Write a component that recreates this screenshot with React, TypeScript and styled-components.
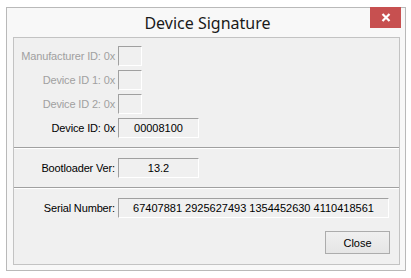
import React from "react";
import styled, { createGlobalStyle } from "styled-components";

const Global = createGlobalStyle`
  html, body { margin: 0; padding: 0; background: #ffffff; }
  body { font-family: "Liberation Sans", Arial, sans-serif; }
`;

const Page = styled.div`
  padding: 7px 0 0 6px;
`;

const Window = styled.div`
  position: relative;
  width: 398px;
  border: 1px solid #b9b9b9;
  background: #f8f8f8;
  box-sizing: content-box;
`;

const TitleBar = styled.div`
  height: 29px;
  display: flex;
  align-items: center;
  justify-content: center;
  font-family: "Noto Sans", "Open Sans", sans-serif;
  font-size: 16px;
  color: #1a1a1a;
  padding-left: 3px;
  padding-top: 1px;
  box-sizing: border-box;
`;

const CloseX = styled.div`
  position: absolute;
  top: -1px;
  right: 4px;
  width: 31px;
  height: 21px;
  background: #c75050;
  display: flex;
  align-items: center;
  justify-content: center;
`;

const Client = styled.div`
  margin: 0 5px 5px 6px;
  border: 1px solid #c3c3c3;
  background: #f0f0f0;
  padding: 8px 0 10px 0;
  display: flex;
  flex-direction: column;
  font-size: 11px;
  font-family: "Liberation Sans", Arial, sans-serif;
`;

const Rows = styled.div`
  display: flex;
  flex-direction: column;
  gap: 4px;
`;

const Row = styled.div`
  display: grid;
  grid-template-columns: 101px auto;
  column-gap: 3px;
  align-items: start;
`;

const Label = styled.div<{ $disabled?: boolean }>`
  text-align: right;
  line-height: 20px;
  height: 20px;
  white-space: nowrap;
  color: ${(p) => (p.$disabled ? "#a0a0a0" : "#000000")};
  letter-spacing: -0.15px;
`;

const ValueBox = styled.div<{ $w: number }>`
  width: ${(p) => p.$w}px;
  height: 20px;
  box-sizing: border-box;
  border-top: 1px solid #a0a0a0;
  border-left: 1px solid #a0a0a0;
  border-right: 1px solid #ffffff;
  border-bottom: 1px solid #ffffff;
  line-height: 18px;
  text-align: center;
  color: #000;
  white-space: nowrap;
`;

const Separator = styled.div`
  height: 1px;
  margin: 9px 0;
  background: #a0a0a0;
  border-bottom: 1px solid #ffffff;
`;

const Footer = styled.div`
  display: flex;
  justify-content: flex-end;
  margin-top: 13px;
  padding-right: 9px;
`;

const Button = styled.button`
  width: 65px;
  height: 23px;
  box-sizing: border-box;
  border: 1px solid #acacac;
  background: linear-gradient(#f0f0f0, #e5e5e5);
  font-family: "Liberation Sans", Arial, sans-serif;
  font-size: 11px;
  color: #000;
  padding: 0;
  margin: 0;
  border-radius: 0;
`;

export default function App() {
  return (
    <Page>
      <Global />
      <Window>
        <TitleBar>Device Signature</TitleBar>
        <CloseX>
          <svg width="10" height="9" viewBox="0 0 10 9">
            <path d="M1.5 1 L8.5 8 M8.5 1 L1.5 8" stroke="#ffffff" strokeWidth="2.2" />
          </svg>
        </CloseX>
        <Client>
          <Rows>
            <Row>
              <Label $disabled>Manufacturer ID: 0x</Label>
              <ValueBox $w={24} />
            </Row>
            <Row>
              <Label $disabled>Device ID 1: 0x</Label>
              <ValueBox $w={24} />
            </Row>
            <Row>
              <Label $disabled>Device ID 2: 0x</Label>
              <ValueBox $w={24} />
            </Row>
            <Row>
              <Label>Device ID: 0x</Label>
              <ValueBox $w={81}>00008100</ValueBox>
            </Row>
          </Rows>
          <Separator />
          <Row>
            <Label>Bootloader Ver:</Label>
            <ValueBox $w={81}>13.2</ValueBox>
          </Row>
          <Separator />
          <Row>
            <Label>Serial Number:</Label>
            <ValueBox $w={271}>67407881 2925627493 1354452630 4110418561</ValueBox>
          </Row>
          <Footer>
            <Button>Close</Button>
          </Footer>
        </Client>
      </Window>
    </Page>
  );
}
